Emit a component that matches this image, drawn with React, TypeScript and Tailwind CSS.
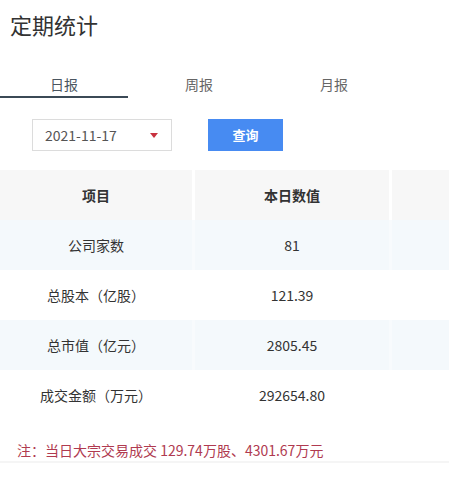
import React, { useState } from 'react';

const rows = [
  { name: '公司家数', value: '81' },
  { name: '总股本（亿股）', value: '121.39' },
  { name: '总市值（亿元）', value: '2805.45' },
  { name: '成交金额（万元）', value: '292654.80' },
];

const tabs = ['日报', '周报', '月报'];

const App = () => {
  const [active, setActive] = useState(0);

  return (
    <div className="w-[449px] h-[481px] overflow-hidden bg-white text-[#333] font-['Noto_Sans_CJK_SC',sans-serif]">
      {/* Title */}
      <h1 className="pt-[9px] pl-[10px] text-[22px] leading-[30px] font-normal text-[#333]">定期统计</h1>

      {/* Tabs */}
      <div className="mt-[30px] flex gap-[7px]">
        {tabs.map((t, i) => (
          <div
            key={t}
            onClick={() => setActive(i)}
            className={`w-[128px] pt-[5px] pb-[2px] text-center text-[14px] leading-[20px] cursor-pointer border-b-2 ${
              active === i ? 'border-[#3b4a56] text-[#4a5560]' : 'border-transparent text-[#666]'
            }`}
          >
            {t}
          </div>
        ))}
      </div>

      {/* Controls */}
      <div className="mt-[21px] flex items-center">
        <div className="ml-[32px] w-[140px] h-[32px] border border-[#dcdcdc] flex items-center justify-between pl-[12px] pr-[13px]">
          <span className="text-[14px] text-[#555]">2021-11-17</span>
          <span className="w-0 h-0 border-l-[4px] border-r-[4px] border-t-[5px] border-l-transparent border-r-transparent border-t-[#c8313f]" />
        </div>
        <button className="ml-[36px] w-[75px] h-[32px] bg-[#478bf2] text-white text-[13px] font-bold">查询</button>
      </div>

      {/* Table */}
      <div className="mt-[19px] w-[449px] overflow-hidden">
        <div className="w-[586px]">
          <div className="grid grid-cols-[192px_194px_194px] gap-x-[3px] h-[50px] text-[14px] font-semibold text-[#333]">
            <div className="bg-[#f7f7f7] flex items-center justify-center">项目</div>
            <div className="bg-[#f7f7f7] flex items-center justify-center">本日数值</div>
            <div className="bg-[#f7f7f7]" />
          </div>
          {rows.map((r, i) => {
            const even = i % 2 === 0;
            return (
              <div
                key={r.name}
                className={`grid grid-cols-[192px_194px_194px] gap-x-[3px] h-[50px] text-[14px] text-[#333] ${even ? 'bg-[#f8fbfd]' : 'bg-white'}`}
              >
                <div className={`${even ? 'bg-[#f4f9fc]' : 'bg-white'} flex items-center justify-center`}>{r.name}</div>
                <div className={`${even ? 'bg-[#f4f9fc]' : 'bg-white'} flex items-center justify-center`}>{r.value}</div>
                <div className={even ? 'bg-[#f4f9fc]' : 'bg-white'} />
              </div>
            );
          })}
        </div>
      </div>

      {/* Note */}
      <p className="mt-[20px] pl-[17px] text-[14px] leading-[20px] text-[#b03a50]">
        注：当日大宗交易成交 129.74万股、4301.67万元
      </p>
      <div className="mt-[1px] h-[2px] bg-[#f5f5f5]" />
    </div>
  );
};

export default App;
